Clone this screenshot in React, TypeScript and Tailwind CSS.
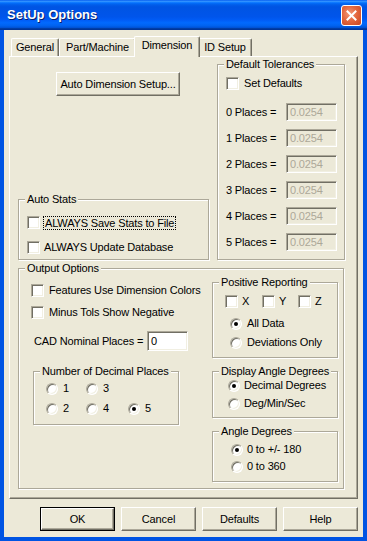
import type { ReactNode } from "react"

const sunken =
  "border border-t-[#aca899] border-l-[#aca899] border-r-white border-b-white shadow-[inset_1px_1px_0_#716f64,inset_-1px_-1px_0_#f1efe2]"

function Check({ checked = false }: { checked?: boolean }) {
  return (
    <span className={`w-[13px] h-[13px] shrink-0 bg-white flex items-center justify-center ${sunken}`}>
      {checked && <span className="text-[10px]">✓</span>}
    </span>
  )
}

function CheckRow({ label, className = "", focus = false }: { label: string; className?: string; focus?: boolean }) {
  return (
    <div className={`flex items-center h-[13px] gap-[4px] ${className}`}>
      <Check />
      <span className={focus ? "border border-dotted border-black leading-[12px] px-[1px] -ml-[1px]" : "leading-[13px]"}>
        {label}
      </span>
    </div>
  )
}

function Radio({ checked = false }: { checked?: boolean }) {
  return (
    <span className="w-[12px] h-[12px] shrink-0 rounded-full bg-white border border-t-[#aca899] border-l-[#aca899] border-r-white border-b-white shadow-[inset_1px_1px_0_#716f64,inset_-1px_-1px_0_#f1efe2] flex items-center justify-center">
      {checked && <span className="w-[4px] h-[4px] rounded-full bg-black" />}
    </span>
  )
}

function RadioRow({ label, checked = false, className = "", gap = "gap-[5px]" }: { label: string; checked?: boolean; className?: string; gap?: string }) {
  return (
    <div className={`flex items-center h-[13px] ${gap} ${className}`}>
      <Radio checked={checked} />
      <span className="leading-[13px]">{label}</span>
    </div>
  )
}

// fieldset padding would shift the legend too, so padding goes on an inner div
function GroupBox({ label, className = "", inner = "", children }: { label: string; className?: string; inner?: string; children: ReactNode }) {
  return (
    <fieldset className={`border border-[#aca899] shadow-[inset_1px_1px_0_#fff,1px_1px_0_#fff] ${className}`}>
      <legend className="ml-[6px] px-[2px] leading-[13px] whitespace-nowrap bg-[#ece9d8]">{label}</legend>
      <div className={inner}>{children}</div>
    </fieldset>
  )
}

function Button({ label, primary = false, className = "" }: { label: string; primary?: boolean; className?: string }) {
  return (
    <div className={`${primary ? "border border-black" : ""} ${className}`}>
      <div className="h-full bg-[#ece9d8] border border-t-white border-l-white border-r-[#716f64] border-b-[#716f64] shadow-[inset_-1px_-1px_0_#aca899] flex items-center justify-center">
        {label}
      </div>
    </div>
  )
}

function PlacesRow({ n }: { n: number }) {
  return (
    <div className="flex items-center h-[18px]">
      <span className="w-[60px]">{n} Places =</span>
      <span className={`w-[51px] h-[18px] bg-[#ece9d8] text-[#aca899] pl-[3px] leading-[16px] ${sunken}`}>0.0254</span>
    </div>
  )
}

const tabBase =
  "h-[18px] bg-[#ece9d8] border-t border-l border-white border-r border-r-[#716f64] rounded-t-[2px] shadow-[inset_-1px_0_0_#aca899] flex items-center justify-center"

export default function App() {
  return (
    <div className="w-[367px] h-[541px] bg-[#0054e3] flex flex-col font-['Liberation_Sans',Arial,sans-serif] text-[11px] tracking-[-0.15px] text-black">
      {/* title bar */}
      <div className="h-[30px] shrink-0 flex items-center justify-between pl-[7px] pr-[5px] bg-[linear-gradient(to_bottom,#0058ee_0%,#3593ff_4%,#288eff_6%,#127dff_8%,#036ffc_10%,#0262ee_14%,#0057e5_20%,#0054e3_24%,#0055eb_56%,#005bf5_66%,#026afe_76%,#0062ef_86%,#0052d6_92%,#0040ab_94%,#003092_100%)]">
        <span className="text-white font-bold text-[13px] tracking-normal [text-shadow:1px_1px_0_#0a1e6a]">SetUp Options</span>
        <div className="w-[21px] h-[21px] rounded-[3px] border border-white bg-[radial-gradient(circle_at_40%_40%,#f29a7b_0%,#e4683f_45%,#c9441f_100%)] flex items-center justify-center">
          <svg width="11" height="11" viewBox="0 0 11 11">
            <path d="M1.5 1.5 L9.5 9.5 M9.5 1.5 L1.5 9.5" stroke="white" strokeWidth="2" strokeLinecap="square" />
          </svg>
        </div>
      </div>

      {/* body */}
      <div className="flex-1 mx-[4px] mb-[4px] bg-[#ece9d8] flex flex-col px-[5px]">
        {/* tabs */}
        <div className="flex items-end pt-[6px] pl-[2px]">
          <div className={`${tabBase} w-[48px]`}>General</div>
          <div className={`${tabBase} w-[77px]`}>Part/Machine</div>
          <div className={`${tabBase} w-[66px] h-[21px] -mx-[2px] -mb-[1px] relative z-10 pb-[3px]`}>Dimension</div>
          <div className={`${tabBase} w-[54px]`}>ID Setup</div>
        </div>

        {/* panel */}
        <div className="h-[443px] border border-t-white border-l-white border-r-[#716f64] border-b-[#716f64] shadow-[inset_-1px_-1px_0_#aca899] pt-[1px] pl-[8px]">
          <div className="flex gap-[8px]">
            <div className="w-[191px] flex flex-col">
              <Button label="Auto Dimension Setup..." className="mt-[14px] ml-[38px] w-[124px] h-[24px]" />
              <GroupBox label="Auto Stats" className="mt-auto" inner="pl-[8px] pb-[5px]">
                <CheckRow label="ALWAYS Save Stats to File" focus className="mt-[10px]" />
                <CheckRow label="ALWAYS Update Database" className="mt-[12px]" />
              </GroupBox>
            </div>
            <GroupBox label="Default Tolerances" className="w-[128px]" inner="pl-[8px] pb-[8px]">
              <CheckRow label="Set Defaults" className="mt-[6px] gap-[5px]" />
              <div className="mt-[13px] flex flex-col gap-[8px]">
                {[0, 1, 2, 3, 4, 5].map((n) => (
                  <PlacesRow key={n} n={n} />
                ))}
              </div>
            </GroupBox>
          </div>

          <GroupBox label="Output Options" className="mt-[2px] w-[326px]" inner="pb-[6px]">
            <div className="flex">
              <div className="w-[193px] flex flex-col">
                <CheckRow label="Features Use Dimension Colors" className="mt-[9px] ml-[12px] gap-[5px]" />
                <CheckRow label="Minus Tols Show Negative" className="mt-[9px] ml-[12px] gap-[5px]" />
                <div className="mt-[12px] ml-[15px] flex items-center h-[20px]">
                  <span className="w-[113px] whitespace-nowrap">CAD Nominal Places =</span>
                  <span className={`w-[41px] h-[20px] bg-white pl-[3px] leading-[18px] ${sunken}`}>0</span>
                </div>
                <GroupBox label="Number of Decimal Places" className="mt-[14px] ml-[14px] w-[146px]" inner="pl-[12px] pb-[9px]">
                  <div className="mt-[4px] flex">
                    <RadioRow label="1" className="w-[40px]" />
                    <RadioRow label="3" />
                  </div>
                  <div className="mt-[7px] flex">
                    <RadioRow label="2" className="w-[40px]" />
                    <RadioRow label="4" className="w-[42px]" />
                    <RadioRow label="5" checked />
                  </div>
                </GroupBox>
              </div>

              <div className="w-[126px] flex flex-col">
                <GroupBox label="Positive Reporting" className="mt-[1px]" inner="pb-[8px]">
                  <div className="mt-[6px] ml-[12px] flex">
                    <CheckRow label="X" className="w-[37px]" />
                    <CheckRow label="Y" className="w-[36px]" />
                    <CheckRow label="Z" />
                  </div>
                  <RadioRow label="All Data" checked className="mt-[9px] ml-[17px]" />
                  <RadioRow label="Deviations Only" className="mt-[6px] ml-[17px]" />
                </GroupBox>
                <GroupBox label="Display Angle Degrees" className="mt-[7px]" inner="pb-[7px]">
                  <RadioRow label="Decimal Degrees" checked gap="gap-[4px]" className="mt-[1px] ml-[15px]" />
                  <RadioRow label="Deg/Min/Sec" gap="gap-[4px]" className="mt-[5px] ml-[15px]" />
                </GroupBox>
                <GroupBox label="Angle Degrees" className="mt-[7px]" inner="pb-[8px]">
                  <RadioRow label="0 to +/- 180" checked gap="gap-[4px]" className="mt-[5px] ml-[18px]" />
                  <RadioRow label="0 to 360" gap="gap-[4px]" className="mt-[4px] ml-[18px]" />
                </GroupBox>
              </div>
            </div>
          </GroupBox>
        </div>

        {/* buttons */}
        <div className="mt-[8px] flex justify-end gap-[6px]">
          <Button label="OK" primary className="w-[75px] h-[24px]" />
          <Button label="Cancel" className="w-[75px] h-[24px]" />
          <Button label="Defaults" className="w-[75px] h-[24px]" />
          <Button label="Help" className="w-[75px] h-[24px]" />
        </div>
      </div>
    </div>
  )
}
